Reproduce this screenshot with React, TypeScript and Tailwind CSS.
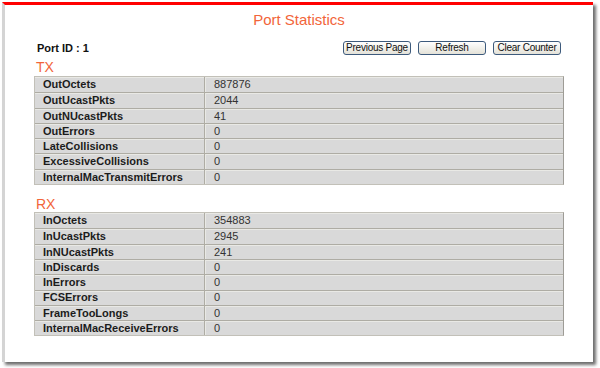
const txRows: [string, string][] = [
  ['OutOctets', '887876'],
  ['OutUcastPkts', '2044'],
  ['OutNUcastPkts', '41'],
  ['OutErrors', '0'],
  ['LateCollisions', '0'],
  ['ExcessiveCollisions', '0'],
  ['InternalMacTransmitErrors', '0'],
]

const rxRows: [string, string][] = [
  ['InOctets', '354883'],
  ['InUcastPkts', '2945'],
  ['InNUcastPkts', '241'],
  ['InDiscards', '0'],
  ['InErrors', '0'],
  ['FCSErrors', '0'],
  ['FrameTooLongs', '0'],
  ['InternalMacReceiveErrors', '0'],
]

function StatTable({ rows }: { rows: [string, string][] }) {
  return (
    <div className="border border-[#c2c0b8] border-r-[#9e9c96] bg-[#d9d9d9]">
      {rows.map(([label, value], i) => (
        <div
          key={label}
          className={`flex h-[15.3px] ${i > 0 ? 'border-t border-[#aeaca4]' : ''}`}
        >
          <div className="flex w-[169px] items-center pl-[8px] text-[11px] font-bold text-[#1c1c1c] shadow-[inset_0_1px_0_#e9e9e5]">
            {label}
          </div>
          <div className="flex flex-1 items-center border-l border-[#aeaca4] pl-[9px] text-[11px] text-[#333] shadow-[inset_1px_1px_0_#e9e9e5]">
            {value}
          </div>
        </div>
      ))}
    </div>
  )
}

function Btn({ children }: { children: string }) {
  return (
    <button className="flex h-[14px] w-[68px] items-center justify-center whitespace-nowrap rounded-[3px] border border-[#3d5a7c] bg-gradient-to-b from-white to-[#e4e2d8] text-[10px] leading-none tracking-[-0.25px] text-[#111]">
      {children}
    </button>
  )
}

export default function App() {
  return (
    <div className="h-[368px] w-[600px] bg-white p-[2px] font-['Liberation_Sans',Arial,sans-serif]">
      <div className="h-[360px] w-[591px] border-l-[3px] border-t-[3px] border-l-[#d4d4d4] border-t-[#ff0000] bg-white px-[29px] pt-[6px] shadow-[3px_3px_3px_#6e6e6e]">
        <h1 className="text-center text-[15px] leading-[18px] text-[#f2653a]">Port Statistics</h1>

        {/* port id + actions */}
        <div className="mt-[12px] flex h-[14px] items-center justify-between">
          <span className="pl-[3px] text-[11px] font-bold text-[#111]">Port ID : 1</span>
          <div className="mr-[3px] flex gap-[7px]">
            <Btn>Previous Page</Btn>
            <Btn>Refresh</Btn>
            <Btn>Clear Counter</Btn>
          </div>
        </div>

        <h2 className="mt-[4px] pl-[2px] text-[14px] leading-[16px] text-[#f2653a]">TX</h2>
        <div className="mt-[1px]">
          <StatTable rows={txRows} />
        </div>

        <h2 className="mt-[11px] pl-[2px] text-[14px] leading-[16px] text-[#f2653a]">RX</h2>
        <StatTable rows={rxRows} />
      </div>
    </div>
  )
}
